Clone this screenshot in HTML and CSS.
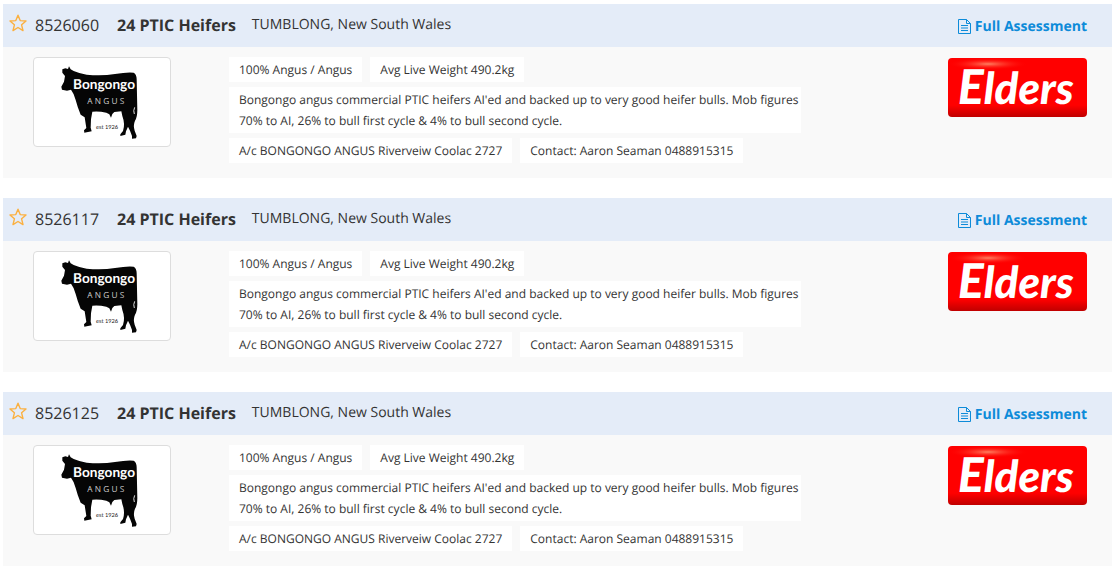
FILE: index.html
```html
<!DOCTYPE html>
<html lang="en">
<head>
<meta charset="utf-8">
<meta name="viewport" content="width=device-width, initial-scale=1">
<title>Listings</title>
<link rel="stylesheet" href="styles.css">
</head>
<body>

<!-- shared gradients for the agent logo -->
<svg class="shared" aria-hidden="true">
  <defs>
    <linearGradient id="red" x1="0" y1="0" x2="0" y2="1">
      <stop offset="0" stop-color="#f00"/>
      <stop offset="0.8" stop-color="#f00"/>
      <stop offset="1" stop-color="#c00000"/>
    </linearGradient>
    <radialGradient id="shine">
      <stop offset="0" stop-color="#ff8060"/>
      <stop offset="1" stop-color="#f00" stop-opacity="0"/>
    </radialGradient>
  </defs>
</svg>

<main class="listings" id="listings"></main>

<!-- one listing -->
<template id="listing_template">
  <article class="listing">
    <header class="listing-head">
      <button type="button" class="fav" aria-label="Add to favourites">
        <svg viewBox="0 0 18 18">
          <path d="M9 1.2 L11.2 6.6 L17 7 L12.6 10.8 L14 16.6 L9 13.5 L4 16.6 L5.4 10.8 L1 7 L6.8 6.6 Z" fill="none" stroke="#fbb040" stroke-width="1.4" stroke-linejoin="round"/>
        </svg>
      </button>
      <span class="number"></span>
      <h2 class="title">24 PTIC Heifers</h2>
      <span class="place">TUMBLONG, New South Wales</span>
      <a class="assessment" href="#">
        <svg viewBox="0 0 13 15">
          <path d="M0.5 0.5 H8.5 L12.5 4.5 V14.5 H0.5 Z M8.5 0.5 V4.5 H12.5 M3 6.5 H10 M3 9 H10 M3 11.5 H10" fill="none" stroke="#0d8bd9"/>
        </svg>Full Assessment</a>
    </header>
    <div class="listing-body">
      <a class="thumb" href="#">
        <svg viewBox="0 0 408 264">
          <g transform="translate(63 6)">
            <path d="M22 28 L31 25 L39 27 L42 19 L47 28 L56 33 Q72 40 95 44 Q140 49 180 42 Q215 36 236 38 Q245 43 245 58 L247 150 Q247 172 240 182 Q234 196 239 212 L245 228 L243 235 L231 236 L231 228 L225 212 L219 200 L213 214 L211 224 L196 228 L196 223 L204 213 Q211 192 202 168 L199 154 L178 156 L172 162 L168 173 L163 163 L154 158 Q132 153 112 155 L108 178 L107 203 L110 214 L88 218 L87 211 L94 204 L89 172 L77 164 Q67 140 62 120 Q57 100 48 89 L36 92 L21 89 L19 80 L27 65 L30 48 L22 38 Z" fill="#050505"/>
            <path d="M239 142 Q234 152 238 162" fill="none" stroke="#ddd" stroke-width="3"/>
            <text class="bull-name" x="54" y="88">Bongongo</text>
            <text class="bull-breed" x="97" y="132">A N G U S</text>
            <text class="bull-est" x="123" y="206">est 1926</text>
          </g>
        </svg>
      </a>
      <div class="details">
        <div class="tags">
          <span class="tag">100% Angus / Angus</span>
          <span class="tag">Avg Live Weight 490.2kg</span>
        </div>
        <p class="tag description">Bongongo angus commercial PTIC heifers AI'ed and backed up to very good heifer bulls. Mob figures 70% to AI, 26% to bull first cycle &amp; 4% to bull second cycle.</p>
        <div class="tags">
          <span class="tag">A/c BONGONGO ANGUS Riverveiw Coolac 2727</span>
          <span class="tag">Contact: Aaron Seaman 0488915315</span>
        </div>
      </div>
      <svg class="agent" viewBox="0 0 139 59">
        <rect width="139" height="59" rx="4" fill="url(#red)"/>
        <ellipse cx="40" cy="6" rx="40" ry="6" fill="url(#shine)"/>
        <text class="elders-name" x="10" y="46"><tspan class="elders-cap">E</tspan>lders</text>
      </svg>
    </div>
  </article>
</template>

<script>
  var numbers = ["8526060", "8526117", "8526125"];
  var list = document.getElementById("listings");
  var template = document.getElementById("listing_template");

  numbers.forEach(function (number) {
    var item = template.content.cloneNode(true);
    item.querySelector(".number").textContent = number;
    list.appendChild(item);
  });
</script>

</body>
</html>
```
FILE: styles.css
```css
* {box-sizing: border-box}

body {
  margin: 0;
  font-family: "Open Sans", sans-serif;
  font-size: 12px;
  color: #333;
  background: #fff;
  text-rendering: geometricPrecision;
}

.shared {
  position: absolute;
  width: 0;
  height: 0;
}

.listings {
  display: flex;
  flex-direction: column;
  gap: 20px;
  padding: 4px 0 0 3px;
}

/* Blue bar on top of each listing */
.listing-head {
  display: flex;
  align-items: center;
  height: 43px;
  padding: 0 25px 2px 6px;
  background: #e4ecf8;
}

.fav {
  width: 18px;
  height: 18px;
  margin: 0 8px 3px 0;
  padding: 0;
  border: none;
  background: none;
  cursor: pointer;
}

.fav svg {
  display: block;
  width: 18px;
  height: 18px;
}

.number {
  width: 82px;
  font-size: 16px;
}

.title {
  margin: 0 16px 0 0;
  font-size: 16px;
  font-weight: 700;
}

.place {
  font-size: 14px;
}

.assessment {
  display: flex;
  align-items: center;
  gap: 4px;
  margin-left: auto;
  padding-top: 3px;
  font-size: 14px;
  font-weight: 700;
  color: #0d8bd9;
  text-decoration: none;
}

.assessment svg {
  width: 13px;
  height: 15px;
}

/* Grey part with the picture, details and agent */
.listing-body {
  display: flex;
  align-items: flex-start;
  padding: 10px 25px 15px 30px;
  background: #f9f9f9;
}

.thumb {
  flex: none;
  width: 138px;
  height: 90px;
  margin-right: 58px;
  border: 1px solid #ddd;
  border-radius: 4px;
  background: #fff;
}

.thumb svg {
  display: block;
  width: 136px;
  height: 88px;
}

.details {
  display: flex;
  flex-direction: column;
  gap: 5px;
  max-width: 572px;
}

.tags {
  display: flex;
  gap: 8px;
}

.tag {
  margin: 0;
  padding: 2px 10px;
  line-height: 21px;
  background: #fff;
}

.description {
  padding-right: 0;
}

.agent {
  flex: none;
  width: 139px;
  height: 59px;
  margin: 1px 0 0 auto;
}

/* Lettering in the logos */
.bull-name {
  font: 700 41px Lato, sans-serif;
  fill: #fff;
}

.bull-breed {
  font: 25px "Open Sans", sans-serif;
  fill: #ccc;
}

.bull-est {
  font: 17px Lato, sans-serif;
  fill: #222;
}

.elders-name {
  font: italic 900 44px Lato, sans-serif;
  fill: #fff;
}

.elders-cap {
  font-size: 48px;
}
```
